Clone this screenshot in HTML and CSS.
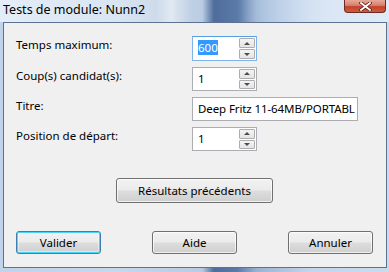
FILE: index.html
```html
<!DOCTYPE html>
<html lang="fr">

<head>
    <meta charset="UTF-8">
    <title>Tests de module: Nunn2</title>
    <link rel="stylesheet" href="styles.css">
</head>

<body>
    <div class="window">
        <!-- Title bar -->
        <div class="title-bar">
            <span class="title-text">Tests de module: Nunn2</span>
            <button class="close-btn" aria-label="Fermer">
                <svg width="13" height="9" viewBox="0 0 13 9">
                    <path d="M2 1 L11 8 M11 1 L2 8" stroke="#5a1a12" stroke-width="3.4" stroke-linecap="square" />
                    <path d="M2 1 L11 8 M11 1 L2 8" stroke="#ffffff" stroke-width="1.8" stroke-linecap="square" />
                </svg>
            </button>
        </div>

        <!-- Client area -->
        <div class="client">
            <div class="form-grid">
                <label class="field-label">Temps maximum:</label>
                <div class="spin-box focused">
                    <span class="spin-value"><span class="selected">600</span></span>
                    <span class="spin-buttons">
                        <span class="spin-btn"><span class="arrow-up"></span></span>
                        <span class="spin-btn"><span class="arrow-down"></span></span>
                    </span>
                </div>

                <label class="field-label">Coup(s) candidat(s):</label>
                <div class="spin-box">
                    <span class="spin-value">1</span>
                    <span class="spin-buttons">
                        <span class="spin-btn"><span class="arrow-up"></span></span>
                        <span class="spin-btn"><span class="arrow-down"></span></span>
                    </span>
                </div>

                <label class="field-label">Titre:</label>
                <div class="text-box">Deep Fritz 11-64MB/PORTABL</div>

                <label class="field-label">Position de départ:</label>
                <div class="spin-box">
                    <span class="spin-value">1</span>
                    <span class="spin-buttons">
                        <span class="spin-btn"><span class="arrow-up"></span></span>
                        <span class="spin-btn"><span class="arrow-down"></span></span>
                    </span>
                </div>
            </div>

            <div class="center-row">
                <button class="win-btn wide-btn">Résultats précédents</button>
            </div>

            <div class="button-row">
                <button class="win-btn default-btn">Valider</button>
                <button class="win-btn">Aide</button>
                <button class="win-btn">Annuler</button>
            </div>
        </div>
    </div>
</body>

</html>
```

FILE: styles.css
```css
/* Global Styles */

* {
    box-sizing: border-box;
    margin: 0;
    padding: 0;
    font-family: "Noto Sans", "Open Sans", sans-serif;
}

html,
body {
    width: 389px;
    height: 272px;
    overflow: hidden;
    background-color: #c9d9ec;
}

.window {
    display: flex;
    flex-direction: column;
    height: 272px;
    background: linear-gradient(90deg, #bfd3ea 0%, #c6d8ec 30%, #b8cbe2 52%, #4e6d9c 55%, #5b7aa8 61%, #9ab3d3 66%, #c4d6ec 80%, #c9dbee 100%);
}

/* Title bar */

.title-bar {
    height: 22px;
    display: flex;
    justify-content: space-between;
    align-items: flex-start;
    background: linear-gradient(90deg, rgba(232, 240, 249, 0.9) 0%, rgba(220, 231, 244, 0.85) 30%, rgba(214, 224, 236, 0.6) 40%, rgba(240, 243, 247, 0.7) 44%, rgba(200, 214, 232, 0.4) 49%, rgba(80, 110, 158, 0) 53%, rgba(80, 110, 158, 0) 62%, rgba(200, 218, 238, 0.5) 70%, rgba(222, 233, 246, 0.85) 85%, rgba(226, 236, 248, 0.9) 100%);
}

.title-text {
    font-size: 12.5px;
    line-height: 16px;
    padding: 2px 0 0 3px;
    color: #000000;
}

.close-btn {
    width: 42px;
    height: 13px;
    margin-right: 3px;
    border: 1px solid #6e2a22;
    border-top: none;
    border-radius: 0 0 4px 4px;
    background: linear-gradient(180deg, #e8a898 0%, #d8806c 45%, #c2442e 55%, #cf5a3e 100%);
    display: flex;
    align-items: center;
    justify-content: center;
}

/* Client area */

.client {
    flex: 1;
    margin: 0 2px 4px 3px;
    border: 1px solid #5d7290;
    background-color: #f0f0f0;
    padding: 13px 13px 13px 12px;
    display: flex;
    flex-direction: column;
}

.form-grid {
    display: grid;
    grid-template-columns: 176px 1fr;
    row-gap: 6px;
    align-items: start;
}

.field-label {
    font-size: 11.5px;
    line-height: 16px;
    padding-top: 1px;
    color: #000000;
}

.spin-box,
.text-box {
    height: 24px;
    background-color: #ffffff;
    border: 1px solid #abadb3;
    font-size: 11.5px;
    color: #000000;
}

.spin-box {
    width: 65px;
    display: flex;
    align-items: stretch;
}

.spin-box.focused {
    height: 25px;
    border-color: #7eb4ea;
    border-top-color: #569de5;
}

.spin-value {
    flex: 1;
    line-height: 20px;
    padding: 1px 0 0 5px;
}

.selected {
    background-color: #3399ff;
    color: #ffffff;
}

.spin-buttons {
    width: 17px;
    display: flex;
    flex-direction: column;
    gap: 1px;
    padding: 1px 1px 1px 0;
}

.spin-btn {
    flex: 1;
    border: 1px solid #adadad;
    border-radius: 1px;
    background: linear-gradient(180deg, #f4f4f4 0%, #e4e4e4 100%);
    display: flex;
    align-items: center;
    justify-content: center;
}

.arrow-up {
    border-left: 3px solid transparent;
    border-right: 3px solid transparent;
    border-bottom: 3px solid #4d4d4d;
}

.arrow-down {
    border-left: 3px solid transparent;
    border-right: 3px solid transparent;
    border-top: 3px solid #4d4d4d;
}

.text-box {
    width: 166px;
    line-height: 20px;
    padding: 1px 0 0 5px;
    white-space: nowrap;
    overflow: hidden;
    letter-spacing: -0.1px;
}

/* Buttons */

.win-btn {
    width: 85px;
    height: 23px;
    font-size: 11.5px;
    color: #000000;
    border: 1px solid #707070;
    border-radius: 3px;
    background: linear-gradient(180deg, #f2f2f2 0%, #ebebeb 48%, #dddddd 52%, #cfcfcf 100%);
    box-shadow: inset 0 0 0 1px rgba(255, 255, 255, 0.7);
}

.center-row {
    display: flex;
    justify-content: center;
    margin-top: 27px;
}

.wide-btn {
    width: 157px;
    height: 25px;
}

.button-row {
    display: flex;
    justify-content: space-between;
    margin-top: auto;
}

.default-btn {
    border-color: #3c7fb1;
    box-shadow: inset 0 0 0 1px #48d5fa, inset 0 0 0 2px rgba(255, 255, 255, 0.4);
}
```
